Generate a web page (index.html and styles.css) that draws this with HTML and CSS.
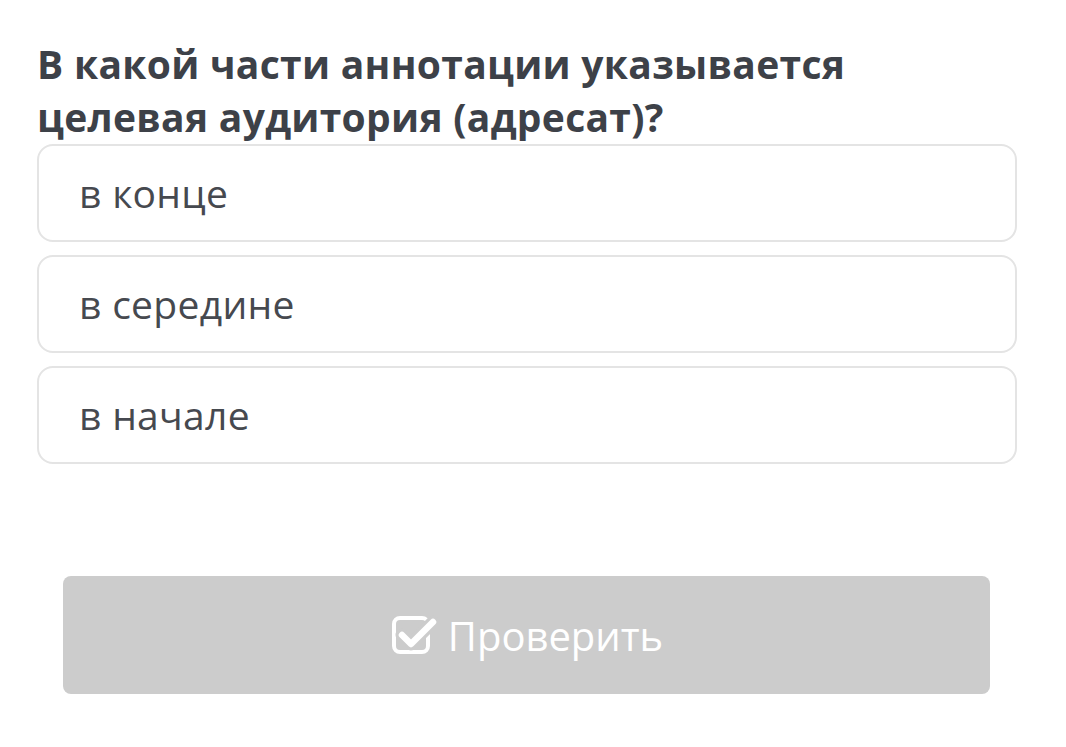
FILE: index.html
```html
<!DOCTYPE html>
<html lang="ru">
<head>
  <meta charset="UTF-8" />
  <meta name="viewport" content="width=device-width, initial-scale=1.0"/>
  <title>Вопрос</title>
  <link rel="stylesheet" href="styles.css">
</head>
<body>
  <div class="quiz">
    <h1 class="question">В какой части аннотации указывается целевая аудитория (адресат)?</h1>

    <div class="options">
      <div class="option">в конце</div>
      <div class="option">в середине</div>
      <div class="option">в начале</div>
    </div>

    <button class="check-btn" disabled>
      <svg class="check-icon" viewBox="0 0 48 44" width="48" height="44" aria-hidden="true">
        <rect x="4" y="5" width="34" height="34" rx="6" fill="none" stroke="#fff" stroke-width="4"/>
        <polyline points="12,22 21,31 43,9" fill="none" stroke="#cccccc" stroke-width="13" stroke-linecap="round" stroke-linejoin="round"/>
        <polyline points="12,22 21,31 43,9" fill="none" stroke="#fff" stroke-width="6.5" stroke-linecap="round" stroke-linejoin="round"/>
      </svg>
      <span>Проверить</span>
    </button>
  </div>
</body>
</html>
```

FILE: styles.css
```css
body {
  margin: 0;
  background: #fff;
  font-family: "Open Sans", Arial, sans-serif;
}
.quiz {
  width: 980px;
  padding: 37px 0 0 37px;
}
.question {
  margin: 0 0 1px;
  font-size: 39px;
  line-height: 53px;
  font-weight: 700;
  letter-spacing: 0.3px;
  color: #3d4148;
  padding-right: 120px;
}
.options {
  display: flex;
  flex-direction: column;
  gap: 13px;
}
.option {
  border: 2px solid #e4e4e4;
  border-radius: 16px;
  padding: 20px 40px 21px;
  font-size: 39px;
  line-height: 53px;
  letter-spacing: 0.3px;
  color: #46494f;
}
.check-btn {
  display: flex;
  align-items: center;
  justify-content: center;
  gap: 10px;
  width: 927px;
  height: 118px;
  margin: 112px 0 0 26px;
  border: none;
  border-radius: 8px;
  background: #cccccc;
  color: #fff;
  font-family: "Open Sans", Arial, sans-serif;
  font-size: 40px;
}
.check-icon {
  display: block;
}
```
